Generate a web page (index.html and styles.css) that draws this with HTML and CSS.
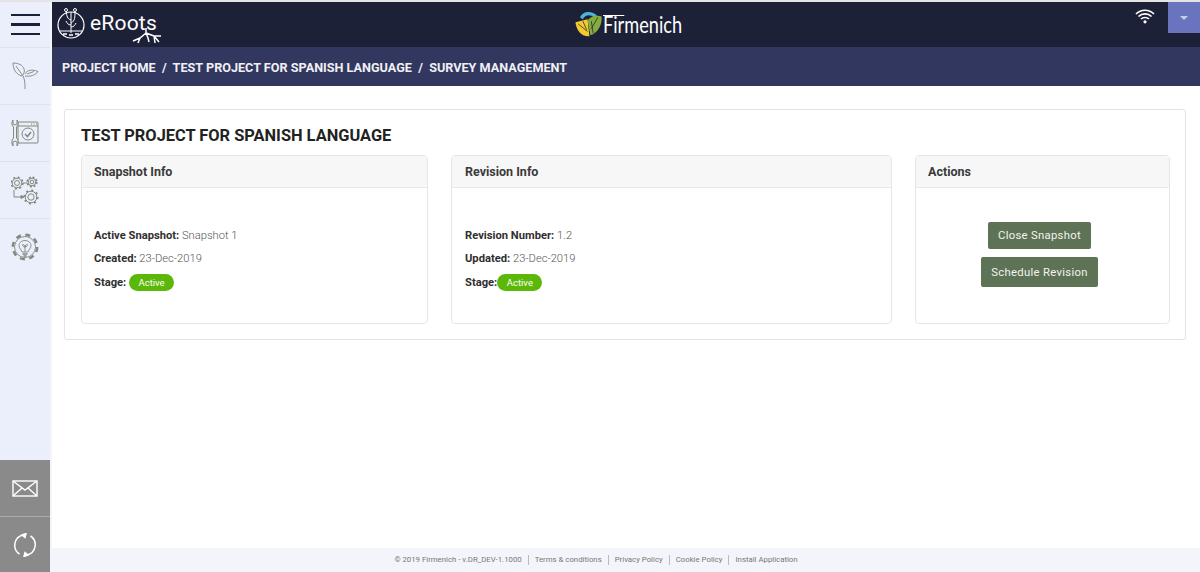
FILE: index.html
```html
<!DOCTYPE html>
<html lang="en">
<head>
    <meta charset="UTF-8">
    <meta name="viewport" content="width=device-width, initial-scale=1.0">
    <title>eRoots - Survey Management</title>
    <link rel="stylesheet" href="styles.css">
</head>
<body>
    <div class="app">
        <aside class="sidebar">
            <div class="menu-toggle">
                <span></span><span></span><span></span>
            </div>
            <div class="side-item side-item-first">
                <svg width="27" height="28" viewBox="0 0 27 28" fill="none" stroke="#8b9089" stroke-width="1">
                    <path d="M1 1 C6 1 11 3 12 7 C13 9 12 12 10 14 C5 13 1 8 1 1 Z"/>
                    <path d="M4 4 L11 14 C13 18 13 22 13 27"/>
                    <path d="M13 12 C15 8 20 7 26 9.500 C24 13 18 15 13 14"/>
                    <path d="M15 12 L22 9.500"/>
                </svg>
            </div>
            <div class="side-item">
                <svg width="28" height="28" viewBox="0 0 28 28" fill="none" stroke="#7f8a7c" stroke-width="1">
                    <rect x="7" y="3" width="20" height="21" rx="1"/>
                    <path d="M7 7 H27"/>
                    <path d="M20 5 H21 M22.500 5 H23.500 M25 5 H26"/>
                    <path d="M2 1 V5 L4 6 L6 5 V1 L7 3 V6 L5.500 8 V19 L7 21 V25 L6 27 V23 L4 22 L2 23 V27 L1 25 V21 L2.500 19 V8 L1 6 V3 Z" fill="#ebeffc"/>
                    <circle cx="17" cy="15" r="6"/>
                    <path d="M14 15 L16.500 17.500 L20 13" stroke-width="1.500"/>
                </svg>
            </div>
            <div class="side-item">
                <svg width="28" height="29" viewBox="0 0 28 29" fill="none" stroke="#7f8a7c">
                    <circle cx="6" cy="7" r="5.800" stroke-width="1.600" stroke-dasharray="2 2.550"/>
                    <circle cx="6" cy="7" r="4.800"/>
                    <circle cx="6" cy="7" r="2.500"/>
                    <circle cx="21" cy="6" r="4.800" stroke-width="1.600" stroke-dasharray="2 1.770"/>
                    <circle cx="21" cy="6" r="3.800"/>
                    <circle cx="21" cy="6" r="1.800"/>
                    <circle cx="20" cy="21" r="6.800" stroke-width="1.600" stroke-dasharray="2 3.340"/>
                    <circle cx="20" cy="21" r="5.800"/>
                    <circle cx="20" cy="21" r="3.200"/>
                    <path d="M12 7 H16"/>
                    <path d="M3 14 V21 H11"/>
                    <path d="M10 19.500 L13 21 L10 22.500 Z" fill="#7f8a7c"/>
                </svg>
            </div>
            <div class="side-item">
                <svg width="28" height="28" viewBox="0 0 28 28" fill="none" stroke="#7f8a7c">
                    <circle cx="14" cy="14" r="12.200" stroke-width="2.500" stroke-dasharray="5 4.580"/>
                    <circle cx="14" cy="14" r="10.500" stroke-width="0.900"/>
                    <path d="M11 19 C10.500 16.500 8 15.500 8 12.500 C8 9.500 11 7.500 14 7.500 C17 7.500 20 9.500 20 12.500 C20 15.500 17.500 16.500 17 19 Z" stroke-width="0.900"/>
                    <path d="M14 19 V13 M14 14 C12.500 14 11.500 13 11.500 11.500 C13 11.500 14 12.500 14 14 C14 12.500 15 11.500 16.500 11.500 C16.500 13 15.500 14 14 14" stroke-width="0.900"/>
                    <path d="M11.500 21 H16.500 M12.500 23 H15.500" stroke-width="1.500"/>
                </svg>
            </div>
            <div class="side-button side-button-first">
                <svg width="26" height="17" viewBox="0 0 26 17" fill="none" stroke="#fff" stroke-width="1.400">
                    <rect x="1" y="1" width="24" height="15"/>
                    <path d="M1 1 L13 10 L25 1"/>
                    <path d="M1 16 L10 8 M25 16 L16 8"/>
                </svg>
            </div>
            <div class="side-button">
                <svg width="24" height="24" viewBox="0 0 24 24" fill="none" stroke="#fff" stroke-width="1.500">
                    <path d="M10 2 A10.500 10.500 0 0 0 6.500 21"/>
                    <path d="M14 22 A10.500 10.500 0 0 0 17.500 3"/>
                    <path d="M13 .5 L9 2 L12 4.500 Z" fill="#fff"/>
                    <path d="M11 23.500 L15 22 L12 19.500 Z" fill="#fff"/>
                </svg>
            </div>
        </aside>

        <div class="main">
            <header class="topbar">
                <div class="brand">
                    <svg class="brand-mark" width="28" height="32" viewBox="0 0 28 32" fill="none" stroke="#fff">
                        <circle cx="14" cy="18" r="13" stroke-width="1.200"/>
                        <path d="M14 26 V5 M14 13 C10 12 10 9 9 4 M14 16 C18 14 18 10 18 4 M14 18 C11 18 10 16 9 14 M14 20 C17 20 18 18 19 16"/>
                        <circle cx="9" cy="3" r="1.500"/>
                        <circle cx="18" cy="3" r="1.500"/>
                        <path d="M3 24 H25" stroke-width="1"/>
                        <path d="M6 27 H10 M12 28 H16 M18 27 H22" stroke-width="1.600"/>
                    </svg>
                    <span class="brand-name">eRoots</span>
                    <svg class="brand-roots" width="30" height="18" viewBox="0 0 30 18" fill="none" stroke="#fff" stroke-width="1.500">
                        <path d="M14 0 V5 L8 10 L1 13 M8 10 L6 15 M14 5 L16 10 L17 14 M14 5 L22 8 L27 14 M22 8 L29 8 M22 8 L23 15"/>
                    </svg>
                </div>
                <div class="client-logo">
                    <svg width="29" height="28" viewBox="0 0 30 30">
                        <path d="M6 8 C8 1 19 0 24 6 L21 8 C17 4 11 5 9 10 Z" fill="#4fb3d9"/>
                        <path d="M1 13 L14 10 L16 28 C8 29 2 22 1 13 Z" fill="#f2c92e"/>
                        <path d="M14 11 C18 6 25 5 29 7 C30 15 25 25 17 27 Z" fill="#84ad3e"/>
                        <path d="M4 15 L14 23 M9 12 L13 21 M18 12 L20 25 M25 8 L18 20" stroke="#1d2138" stroke-width="0.800"/>
                    </svg>
                    <span class="client-name">Firmenich</span>
                </div>
                <div class="topbar-right">
                    <svg class="wifi" width="20" height="15" viewBox="0 0 20 15" fill="none" stroke="#fff" stroke-width="1.700">
                        <path d="M1 5 C6 0 14 0 19 5"/>
                        <path d="M3.500 7.500 C7 4 13 4 16.500 7.500"/>
                        <path d="M6 10 C8 8 12 8 14 10"/>
                        <circle cx="10" cy="12.800" r="1.600" fill="#fff" stroke="none"/>
                    </svg>
                    <div class="user-menu"><span class="caret"></span></div>
                </div>
            </header>
            <nav class="breadcrumb">PROJECT HOME&nbsp; /&nbsp; TEST PROJECT FOR SPANISH LANGUAGE&nbsp; /&nbsp; SURVEY MANAGEMENT</nav>

            <section class="content">
                <div class="panel">
                    <h1>TEST PROJECT FOR SPANISH LANGUAGE</h1>
                    <div class="cards">
                        <div class="card">
                            <h2>Snapshot Info</h2>
                            <div class="card-body">
                                <p><b>Active Snapshot:</b> Snapshot 1</p>
                                <p><b>Created:</b> 23-Dec-2019</p>
                                <p><b>Stage:</b> <span class="badge">Active</span></p>
                            </div>
                        </div>
                        <div class="card">
                            <h2>Revision Info</h2>
                            <div class="card-body">
                                <p><b>Revision Number:</b> 1.2</p>
                                <p><b>Updated:</b> 23-Dec-2019</p>
                                <p><b>Stage:</b><span class="badge">Active</span></p>
                            </div>
                        </div>
                        <div class="card">
                            <h2>Actions</h2>
                            <div class="card-actions">
                                <button class="btn btn-small">Close Snapshot</button>
                                <button class="btn">Schedule Revision</button>
                            </div>
                        </div>
                    </div>
                </div>
            </section>

            <footer class="footer">
                <span>© 2019 Firmenich - v.DR_DEV-1.1000</span>
                <span>Terms &amp; conditions</span>
                <span>Privacy Policy</span>
                <span>Cookie Policy</span>
                <span>Install Application</span>
            </footer>
        </div>
    </div>
</body>
</html>
```

FILE: styles.css
```css
* {
    box-sizing: border-box;
}
body {
    margin: 0;
    font-family: Roboto, Arial, sans-serif;
    background-color: #fff;
    color: #333;
}
.app {
    display: flex;
    height: 572px;
    border-top: 2px solid #e4e4e4;
    overflow: hidden;
}

/* sidebar */
.sidebar {
    width: 52px;
    flex: none;
    display: flex;
    flex-direction: column;
    background: #ebeffc;
    border-right: 2px solid #f3f5fb;
}
.menu-toggle {
    height: 45px;
    display: flex;
    flex-direction: column;
    justify-content: center;
    gap: 7px;
    padding: 0 10px 0 11px;
}
.menu-toggle span {
    height: 2.500px;
    background: #1d2138;
}
.side-item {
    height: 57px;
    display: flex;
    align-items: center;
    justify-content: center;
    border-top: 1px solid #dfe2ec;
}
.side-button {
    height: 56px;
    display: flex;
    align-items: center;
    justify-content: center;
    background: #8a8a8a;
    border-top: 1px solid #a9a9ae;
}
.side-button-first {
    margin-top: auto;
    border-top: 0;
}

/* top */
.main {
    flex: 1;
    min-width: 0;
    display: flex;
    flex-direction: column;
}
.topbar {
    height: 45px;
    flex: none;
    position: relative;
    display: flex;
    justify-content: space-between;
    background: #1d2138;
    color: #fff;
}
.brand {
    display: flex;
    align-items: flex-start;
    padding: 5px 0 0 5px;
}
.brand-name {
    margin: 3px 0 0 5px;
    font-size: 21px;
    line-height: 26px;
    letter-spacing: .2px;
}
.brand-roots {
    margin: 21px 0 0 -25px;
}
.client-logo {
    position: absolute;
    left: 522px;
    top: 8px;
    display: flex;
    align-items: center;
    gap: 0;
}
.client-name {
    position: relative;
    font-family: Lato, sans-serif;
    font-weight: 400;
    font-size: 23px;
    line-height: 28px;
    transform: scaleX(.79);
    transform-origin: left center;
}
.client-name::before {
    content: "";
    position: absolute;
    left: 0;
    top: 5px;
    width: 27px;
    height: 1px;
    background: #fff;
}
.topbar-right {
    display: flex;
    align-items: flex-start;
}
.wifi {
    margin: 7px 13px 0 0;
}
.user-menu {
    width: 32px;
    height: 31px;
    display: flex;
    align-items: center;
    justify-content: center;
    background: #6a73bd;
}
.caret {
    border-left: 4px solid transparent;
    border-right: 4px solid transparent;
    border-top: 4px solid #c7cbe8;
}
.breadcrumb {
    height: 39px;
    flex: none;
    padding: 0 10px;
    background: #32375f;
    color: #f0f0f4;
    font-size: 12.650px;
    font-weight: 700;
    line-height: 41px;
}

/* content */
.content {
    flex: 1;
    padding: 23px 14px 0 12px;
}
.panel {
    height: 231px;
    padding: 16px 16px 0;
    border: 1px solid #e3e3e3;
    border-radius: 3px;
}
h1 {
    margin: 0 0 10px;
    font-size: 16.400px;
    line-height: 19px;
    font-weight: 700;
    color: #222;
}
.cards {
    display: grid;
    grid-template-columns: 347px 441px 255px;
    gap: 23px;
}
.card {
    height: 169px;
    border: 1px solid #e6e6e6;
    border-radius: 4px;
}
h2 {
    margin: 0;
    height: 32px;
    padding: 0 13px 0 12px;
    background: #f7f7f7;
    border-bottom: 1px solid #e9e9e9;
    font-size: 12.500px;
    font-weight: 700;
    line-height: 31px;
    color: #3a3a3a;
}
.card:nth-child(2) h2,
.card:nth-child(2) .card-body {
    padding-left: 13px;
}
.card-body {
    padding: 40px 12px 0;
    font-size: 11.200px;
    font-weight: 300;
    color: #555;
}
.card-body p {
    margin: 0 0 7px;
    height: 16px;
    line-height: 16px;
}
.card-body b {
    color: #2f2f2f;
    font-weight: 700;
}
.badge {
    display: inline-block;
    height: 17px;
    padding: 0 9.500px;
    border-radius: 9px;
    background: #5cb808;
    color: #fff;
    font-size: 9.500px;
    font-weight: 400;
    line-height: 17px;
}
.card-actions {
    display: flex;
    flex-direction: column;
    align-items: center;
    gap: 8px;
    padding: 34px 6px 0 0;
}
.btn {
    height: 30px;
    padding: 0 10px;
    border: 0;
    border-radius: 2px;
    background: #5e7256;
    color: #f2f4ef;
    font-family: Roboto, Arial, sans-serif;
    font-size: 11.300px;
    letter-spacing: .3px;
}
.btn-small {
    height: 27px;
}

/* footer */
.footer {
    height: 24px;
    flex: none;
    display: flex;
    align-items: center;
    justify-content: center;
    padding-right: 60px;
    background: #f3f5fb;
    font-size: 7.800px;
    color: #777;
}
.footer span {
    padding: 0 6px;
    border-left: 1px solid #bbb;
    line-height: 10px;
}
.footer span:first-child {
    border-left: 0;
}
```
